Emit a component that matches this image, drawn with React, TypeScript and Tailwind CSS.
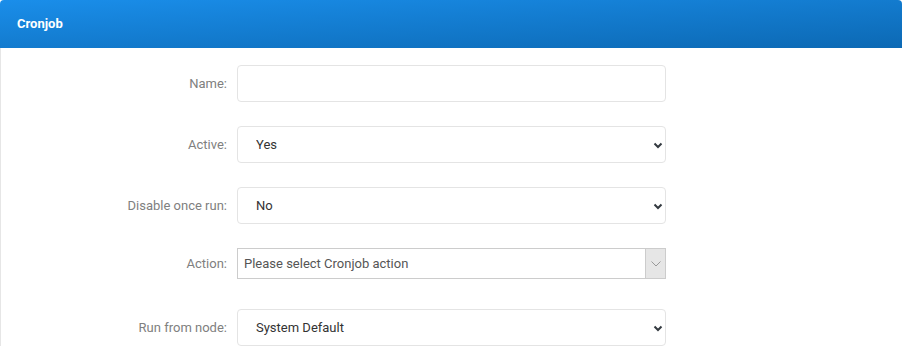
import { ReactNode } from 'react'

const labelCls = 'w-[228px] pr-[2px] text-right text-[13px] text-[#808080]'

function Row({ label, children, last }: { label: string; children: ReactNode; last?: string }) {
  return (
    <div className={`flex items-center ${last ?? 'mb-[24px]'}`}>
      <label className={labelCls}>{label}:</label>
      <div className="ml-[8px] w-[429px]">{children}</div>
    </div>
  )
}

function Chevron() {
  return (
    <svg
      className="pointer-events-none absolute right-[3px] top-1/2 -translate-y-1/2"
      width="10"
      height="8"
      viewBox="0 0 10 8"
    >
      <path d="M1.5 2.5 L5 6 L8.5 2.5" fill="none" stroke="#343a40" strokeWidth="2" />
    </svg>
  )
}

function Select({ value }: { value: string }) {
  return (
    <div className="relative">
      <select
        defaultValue={value}
        className="block h-[37px] w-full appearance-none rounded-[4px] border border-[#e4e4e4] bg-white pl-[18px] text-[13px] text-[#333] outline-none"
      >
        <option>{value}</option>
      </select>
      <Chevron />
    </div>
  )
}

export default function App() {
  return (
    <div className="h-[362px] w-[902px] bg-white" style={{ fontFamily: 'Roboto, "Liberation Sans", sans-serif' }}>
      <div className="flex h-[48px] items-center rounded-t-[4px] bg-gradient-to-br from-[#1a8eea] to-[#0c69b4] pl-[17px]">
        <h1 className="text-[13px] font-bold text-white">Cronjob</h1>
      </div>

      <div className="border-l border-[#e6e6e6] pt-[17px]">
        <Row label="Name">
          <input className="block h-[37px] w-full rounded-[4px] border border-[#e4e4e4] px-3 text-[13px] outline-none" />
        </Row>
        <Row label="Active">
          <Select value="Yes" />
        </Row>
        <Row label="Disable once run">
          <Select value="No" />
        </Row>
        <Row label="Action" last="mb-[30px]">
          <div className="flex h-[31px] w-full border border-[#cccccc] bg-white">
            <span className="flex-1 pl-[6px] text-[13px] leading-[29px] text-[#555]">Please select Cronjob action</span>
            <span className="flex w-[20px] items-center justify-center border-l border-[#cccccc] bg-[#e6e6e6]">
              <svg width="10" height="6" viewBox="0 0 10 6">
                <path d="M0.5 0.5 L5 5 L9.5 0.5" fill="none" stroke="#999" strokeWidth="1" />
              </svg>
            </span>
          </div>
        </Row>
        <Row label="Run from node" last="mb-0">
          <Select value="System Default" />
        </Row>
      </div>
    </div>
  )
}
